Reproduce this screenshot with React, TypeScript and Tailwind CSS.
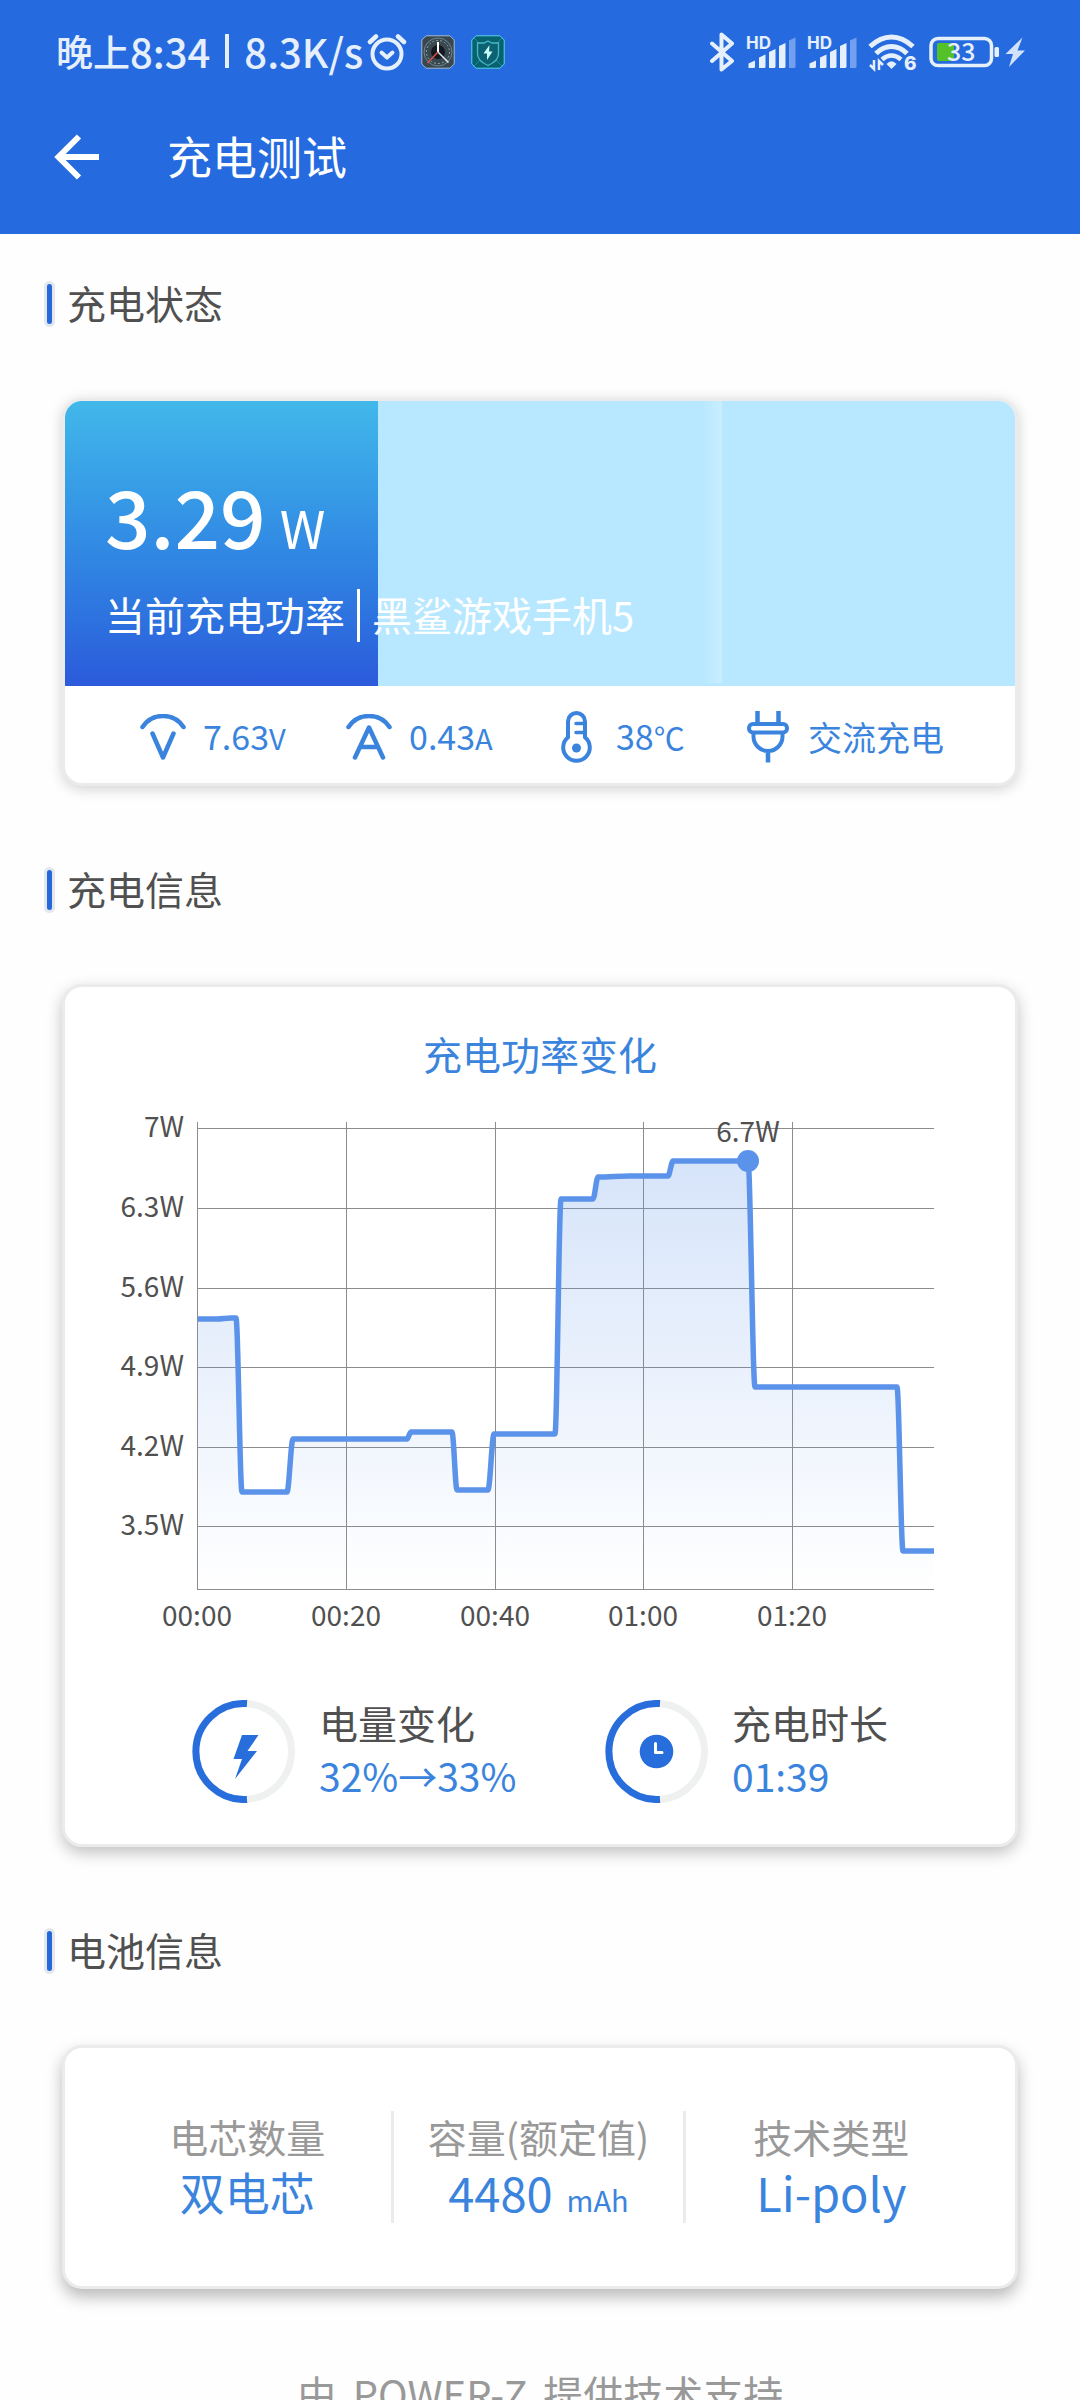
import type { ReactNode } from "react";

/* ---------- status bar icons ---------- */

function AlarmIcon() {
  return (
    <svg className="h-10 w-10" viewBox="0 0 40 40" fill="none" stroke="#e6effc" strokeLinecap="round" aria-hidden="true">
      <circle cx="20" cy="22" r="14.5" strokeWidth="4" />
      <path d="M14.500 20.500l5.500 5 5.500-5" strokeWidth="4" strokeLinejoin="round" />
      <path d="M3 10L9 4.500M37 10l-6-5.500" strokeWidth="4.500" />
    </svg>
  );
}

function GaugeAppIcon() {
  return (
    <svg className="h-[34px] w-[34px]" viewBox="0 0 34 34" fill="none" aria-hidden="true">
      <path d="M5 .8h24l4.200 4.200v24L29 33.200H5L.8 29V5z" fill="#39474f" stroke="#a9b9cf" />
      <circle cx="17" cy="17" r="14" stroke="#6f8893" />
      <circle cx="17" cy="17" r="11.500" stroke="#8fa6ae" strokeDasharray="2 2" />
      <circle cx="17" cy="17" r="7" fill="#141a1f" />
      <path d="M17 17V7" stroke="#fff" strokeWidth="2" />
      <path d="M17 17l10.500 10.500" stroke="#dfe8ee" strokeWidth="1.500" />
      <path d="M17 17L6.500 28" stroke="#d8524a" strokeWidth="1.500" />
    </svg>
  );
}

function ShieldAppIcon() {
  return (
    <svg className="h-[34px] w-[34px]" viewBox="0 0 34 34" fill="none" aria-hidden="true">
      <path d="M5 .8h24l4.200 4.200v24L29 33.200H5L.8 29V5z" fill="#07616e" stroke="#56d3ee" />
      <path d="M3 3l5 5M31 3l-5 5M3 31l6-6M31 31l-6-6" stroke="#1f8e9b" />
      <path d="M17 6l4 2h6.500v11c0 5-5 9-10.500 11.500C11.500 28 6.500 24 6.500 19V8H13z" fill="#0a6272" stroke="#49b9c6" strokeWidth="1.300" />
      <path d="M18.500 10l-6 8.500h3.500v6.500l5.500-8.500h-3.500z" fill="#c9fbf5" />
    </svg>
  );
}

function BluetoothIcon() {
  return (
    <svg className="h-10 w-[26px]" viewBox="0 0 26 40" fill="none" stroke="#e6effc" strokeWidth="4" strokeLinecap="round" strokeLinejoin="round" aria-hidden="true">
      <path d="M3 11.500L23 29l-10.500 8.500v-35L23 11.500 3 29" />
    </svg>
  );
}

function SignalIcon() {
  return (
    <svg className="h-11 w-[50px]" viewBox="0 -5 50 44" fill="#e6effc" aria-hidden="true">
      <text x="0" y="14" fontSize="17" fontWeight="700" fontFamily="Inter, sans-serif">HD</text>
      <path d="M2.500 33V28.500L9 25.500V31.500q0 1.500-1.500 1.500z" />
      <path d="M13 33V22.500L19.500 19.500V31.500q0 1.500-1.500 1.500z" />
      <path d="M23 33V17L29.500 14V31.500q0 1.500-1.500 1.500z" />
      <path d="M33 33V11L39.500 8V31.500q0 1.500-1.500 1.500z" />
      <path d="M43 33V5.500L49.500 2.500V31.500q0 1.500-1.500 1.500z" fill="#729fee" />
    </svg>
  );
}

function WifiIcon() {
  return (
    <svg className="h-[50px] w-[50px]" viewBox="0 -6 50 50" fill="none" stroke="#e6effc" strokeWidth="5" aria-hidden="true">
      <path d="M2 13.500Q12.500 4 23.500 4T45 13.500" />
      <path d="M8 20.500Q15 13.500 23.500 13.500T39 20.500" />
      <path d="M14 26.500Q18.500 22.500 23.500 22.500T33 26.500" strokeWidth="4.500" />
      <path d="M23.500 36l-5-5q5-5.500 10 0z" fill="#e6effc" stroke="none" />
      <path d="M6 27v9l-4-4M11 37v-9l4 4" strokeWidth="2.500" />
      <text x="36" y="37" fontSize="19" fontWeight="800" fontFamily="Inter, sans-serif" fill="#e6effc" stroke="none">6</text>
    </svg>
  );
}

function BatteryIcon() {
  return (
    <svg className="h-[46px] w-[97px]" viewBox="0 -7 97 46" fill="none" aria-hidden="true">
      <rect x="2" y="2.500" width="60.500" height="27" rx="7" stroke="#e6effc" strokeWidth="3.500" />
      <rect x="8" y="7" width="17" height="18" rx="2" fill="#55c128" />
      <rect x="65.500" y="11" width="4.500" height="10" rx="1.500" fill="#e6effc" />
      <text x="18" y="25" fontSize="25" fontFamily="'Noto Sans CJK SC', sans-serif" fill="#e6effc">33</text>
      <path d="M93.500 1.500L76.500 18h7.500l-4 13L96 14.500h-7.500z" fill="#d3e2fb" />
    </svg>
  );
}

/* ---------- metric icons ---------- */

function VoltIcon() {
  return (
    <svg className="h-[46px] w-[46px]" viewBox="0 0 46 46" fill="none" stroke="#3a84dd" strokeWidth="4.500" strokeLinecap="round" strokeLinejoin="round" aria-hidden="true">
      <path d="M2.500 13a24.600 24.600 0 0 1 41 0M12.500 19.500L23 43.500l10.500-24" />
    </svg>
  );
}

function AmpIcon() {
  return (
    <svg className="h-[46px] w-[46px]" viewBox="0 0 46 46" fill="none" stroke="#3a84dd" strokeWidth="4.500" strokeLinecap="round" strokeLinejoin="round" aria-hidden="true">
      <path d="M2.500 13a24.600 24.600 0 0 1 41 0M9 43.500l14-30 14 30M14 33h18" />
    </svg>
  );
}

function ThermometerIcon() {
  return (
    <svg className="h-[52px] w-[46px]" viewBox="0 0 46 52" fill="none" stroke="#3a84dd" strokeWidth="4" aria-hidden="true">
      <path d="M15 26.300V10.500a8.500 8.500 0 0 1 17 0V26.300A13.300 13.300 0 1 1 15 26.300Z" />
      <path d="M23 12.500h9M23 21.500h9" strokeWidth="3.500" strokeLinecap="round" />
      <circle cx="23.500" cy="37" r="4.500" fill="#3a84dd" stroke="none" />
    </svg>
  );
}

function PlugIcon() {
  return (
    <svg className="h-[52px] w-[46px]" viewBox="0 0 46 52" fill="none" stroke="#3a84dd" strokeWidth="4" aria-hidden="true">
      <path d="M12.500 0v12M33.500 0v12M23 42v9.500" strokeWidth="4.500" />
      <rect x="4" y="13" width="38" height="8.500" rx="4" />
      <path d="M8.500 22v3.500a14.500 14.500 0 0 0 29 0V22" />
    </svg>
  );
}

/* ---------- progress rings ---------- */

function Ring({ children }: { children: ReactNode }) {
  return (
    <svg className="h-[103px] w-[103px] shrink-0" viewBox="0 0 103 103" fill="none" aria-hidden="true">
      <circle cx="51.500" cy="51.500" r="48" stroke="#eff1f0" strokeWidth="7" />
      <path d="M55 3.600A48 48 0 1 0 55 99.400" stroke="#276edc" strokeWidth="7" />
      {children}
    </svg>
  );
}

/* ---------- power chart ---------- */

const SAMPLES: [number, number][] = [
  [133, 219], [152, 219], [166, 218], [171, 218], [177, 392], [222, 392], [228, 339],
  [342, 339], [346, 332], [387, 332], [392, 390], [423, 390], [429, 334],
  [490, 334], [496, 99], [528, 99], [533, 77], [565, 76], [603, 76], [608, 61],
  [683, 61], [690, 287], [832, 287], [838, 451], [869, 451],
];

const LINE = SAMPLES.map(([x, y], i) => {
  if (i === 0) return `M${x} ${y}`;
  const [px, py] = SAMPLES[i - 1];
  const third = (x - px) / 3;
  return `C${px + third} ${py} ${x - third} ${y} ${x} ${y}`;
}).join(" ");

const Y_TICKS: [string, number][] = [
  ["7W", 28], ["6.3W", 108], ["5.6W", 188], ["4.9W", 267], ["4.2W", 347], ["3.5W", 426],
];

const X_TICKS: [string, number][] = [
  ["00:00", 132], ["00:20", 281], ["00:40", 430], ["01:00", 578], ["01:20", 727],
];

function PowerChart() {
  return (
    <svg className="mt-[23px] w-full" viewBox="0 0 950 540" role="img" aria-label="充电功率变化" fontFamily="'Noto Sans CJK SC', sans-serif" fontSize="28">
      <defs>
        <linearGradient id="area" gradientUnits="userSpaceOnUse" x1="0" y1="28" x2="0" y2="490">
          <stop offset="0" stopColor="#5c93ea" stopOpacity="0.27" />
          <stop offset="1" stopColor="#5c93ea" stopOpacity="0" />
        </linearGradient>
      </defs>
      <g stroke="#8c8c8c" strokeWidth="1" shapeRendering="crispEdges">
        {Y_TICKS.map(([label, y]) => (
          <path key={label} d={`M132 ${y}.5H869`} />
        ))}
        {X_TICKS.map(([label, x]) => (
          <path key={label} d={`M${x}.5 22V490`} />
        ))}
        <path d="M132 489.500H869" />
      </g>
      <path d={`${LINE} V489 H133 Z`} fill="url(#area)" />
      <path d={LINE} fill="none" stroke="#5c93ea" strokeWidth="5.500" strokeLinejoin="round" />
      <circle cx="683" cy="61" r="11" fill="#5c93ea" />
      <g fill="#505050">
        {Y_TICKS.map(([label, y]) => (
          <text key={label} x="119" y={y + 9} textAnchor="end">{label}</text>
        ))}
        {X_TICKS.map(([label, x]) => (
          <text key={label} x={x} y="526" textAnchor="middle">{label}</text>
        ))}
        <text x="683" y="42" textAnchor="middle">6.7W</text>
      </g>
    </svg>
  );
}

/* ---------- page parts ---------- */

const POWER_WATTS = 3.29;
const POWER_SCALE = 10;

function SectionTitle({ children }: { children: ReactNode }) {
  return (
    <div className="flex h-[46px] gap-3 pl-11">
      <span className="h-full w-[11px] rounded-md border-[3px] border-[#e4e8ee] bg-[#2469da]" />
      <h2 className="text-[39px] leading-[43px] text-[#505050]">{children}</h2>
    </div>
  );
}

function Metric({ icon, children }: { icon: ReactNode; children: ReactNode }) {
  return (
    <div className="flex items-center gap-[17px] text-[34px] leading-[40px]">
      {icon}
      <span className="whitespace-nowrap">{children}</span>
    </div>
  );
}

function Summary({ icon, label, value }: { icon: ReactNode; label: string; value: string }) {
  return (
    <div className="flex items-center gap-6">
      <Ring>{icon}</Ring>
      <dl className="pb-1 text-[39px] leading-[53px] whitespace-nowrap">
        <dt className="text-[#505050]">{label}</dt>
        <dd className="text-[#3a84dd]">{value}</dd>
      </dl>
    </div>
  );
}

export default function App() {
  return (
    <div className="flex h-screen flex-col overflow-hidden bg-[#fefefe] font-['Noto_Sans_CJK_SC',sans-serif]">
      <header className="shrink-0 bg-[#256bdf] pb-6">
        <div className="flex h-[104px] items-center justify-between pr-[54px] pl-14 font-medium text-[#e6effc]">
          <div className="flex items-center">
            <p className="flex items-center pb-[3px] text-[40px] leading-[48px] whitespace-nowrap">
              <span className="text-[37px]">晚上</span>
              <span>8:34</span>
              <span className="mx-[15px] h-[34px] w-1 bg-[#e6effc]" />
              <span>8.3K/s</span>
            </p>
            <span className="ml-1"><AlarmIcon /></span>
            <span className="ml-3.5"><GaugeAppIcon /></span>
            <span className="ml-4"><ShieldAppIcon /></span>
          </div>
          <div className="flex items-center gap-[11px]">
            <BluetoothIcon />
            <SignalIcon />
            <SignalIcon />
            <WifiIcon />
            <BatteryIcon />
          </div>
        </div>
        <div className="flex h-[106px] items-center gap-[67px] pl-[54px]">
          <button type="button" aria-label="返回">
            <svg className="h-[46px] w-[46px]" viewBox="0 0 46 46" fill="none" stroke="#fff" strokeWidth="6" aria-hidden="true">
              <path d="M45 23H5M25 2.500L4.500 23 25 43.500" />
            </svg>
          </button>
          <h1 className="pb-[3px] text-[45px] leading-[60px] text-white">充电测试</h1>
        </div>
      </header>

      <main className="flex-1 overflow-hidden pt-[47px]">
        <SectionTitle>充电状态</SectionTitle>
        <section className="mx-[62px] mt-[71px] overflow-hidden rounded-[20px] border-[3px] border-[#ebebeb] bg-white shadow-[0_3px_14px_rgba(0,0,0,0.18)]">
          <div className="relative h-[285px] bg-[#b8e8ff] pt-[67px] pl-10 text-white">
            <div
              className="absolute inset-y-0 left-0 bg-linear-to-b from-[#42b8ea] to-[#2c5adb]"
              style={{ width: `${(POWER_WATTS / POWER_SCALE) * 100}%` }}
            />
            <div className="absolute top-0 bottom-[3px] left-[67%] w-5 bg-linear-to-r from-white/0 to-white/25" />
            <div className="relative">
              <p className="flex h-[92px] items-baseline gap-3.5 leading-[92px]">
                <span className="text-[80px] font-medium">{POWER_WATTS}</span>
                <span className="text-[52px]">W</span>
              </p>
              <p className="mt-[29px] flex h-[53px] gap-3 text-[40px] leading-[50px] whitespace-nowrap">
                <span>当前充电功率</span>
                <span className="h-full w-[3px] bg-white" />
                <span>黑鲨游戏手机5</span>
              </p>
            </div>
          </div>
          <div className="flex h-[97px] items-center justify-between pt-1 pr-[71px] pl-[75px] text-[#3a84dd]">
            <Metric icon={<VoltIcon />}>7.63<span className="text-[29px]">V</span></Metric>
            <Metric icon={<AmpIcon />}>0.43<span className="text-[29px]">A</span></Metric>
            <Metric icon={<ThermometerIcon />}>38<span className="text-[31px]">℃</span></Metric>
            <Metric icon={<PlugIcon />}>交流充电</Metric>
          </div>
        </section>

        <div className="mt-[81px]"><SectionTitle>充电信息</SectionTitle></div>
        <section className="mx-[62px] mt-[71px] rounded-[20px] border-[3px] border-[#ebebeb] bg-white pt-[42px] pb-[38px] shadow-[0_6px_16px_rgba(0,0,0,0.24)]">
          <h3 className="text-center text-[39px] leading-[48px] text-[#3a84dd]">充电功率变化</h3>
          <PowerChart />
          <div className="mt-14 flex justify-between px-[127px]">
            <Summary
              icon={<path d="M50 35h16.500L55.500 51h9.500L43 79l7-20h-8.500z" fill="#276edc" />}
              label="电量变化"
              value="32%→33%"
            />
            <Summary
              icon={
                <>
                  <circle cx="51.500" cy="51.500" r="16.800" fill="#276edc" />
                  <path d="M50.500 43.500v9h6.500" stroke="#fff" strokeWidth="3" strokeLinecap="round" strokeLinejoin="round" />
                </>
              }
              label="充电时长"
              value="01:39"
            />
          </div>
        </section>

        <div className="mt-[81px]"><SectionTitle>电池信息</SectionTitle></div>
        <section className="mx-[62px] mt-[71px] rounded-[20px] border-[3px] border-[#ebebeb] bg-white px-[38px] py-[63px] shadow-[0_8px_16px_rgba(0,0,0,0.27)]">
          <dl className="grid grid-cols-3 divide-x-[3px] divide-[#ebebeb] text-center text-[45px] whitespace-nowrap text-[#3a84dd]">
            <div>
              <dt className="text-[39px] leading-[50px] text-[#999999]">电芯数量</dt>
              <dd className="h-[62px] leading-[62px]">双电芯</dd>
            </div>
            <div>
              <dt className="text-[39px] leading-[50px] text-[#999999]">容量(额定值)</dt>
              <dd className="flex h-[62px] items-baseline justify-center gap-3.5 text-[47px] leading-[62px]">
                <span>4480</span>
                <span className="text-[29px]">mAh</span>
              </dd>
            </div>
            <div>
              <dt className="text-[39px] leading-[50px] text-[#999999]">技术类型</dt>
              <dd className="h-[62px] text-[47px] leading-[62px]">Li-poly</dd>
            </div>
          </dl>
        </section>

        <p className="mt-20 flex justify-center gap-4 text-[40px] leading-[48px] whitespace-nowrap text-[#999999]">
          <span>由</span>
          <span>POWER-Z</span>
          <span>提供技术支持</span>
        </p>
      </main>
    </div>
  );
}
